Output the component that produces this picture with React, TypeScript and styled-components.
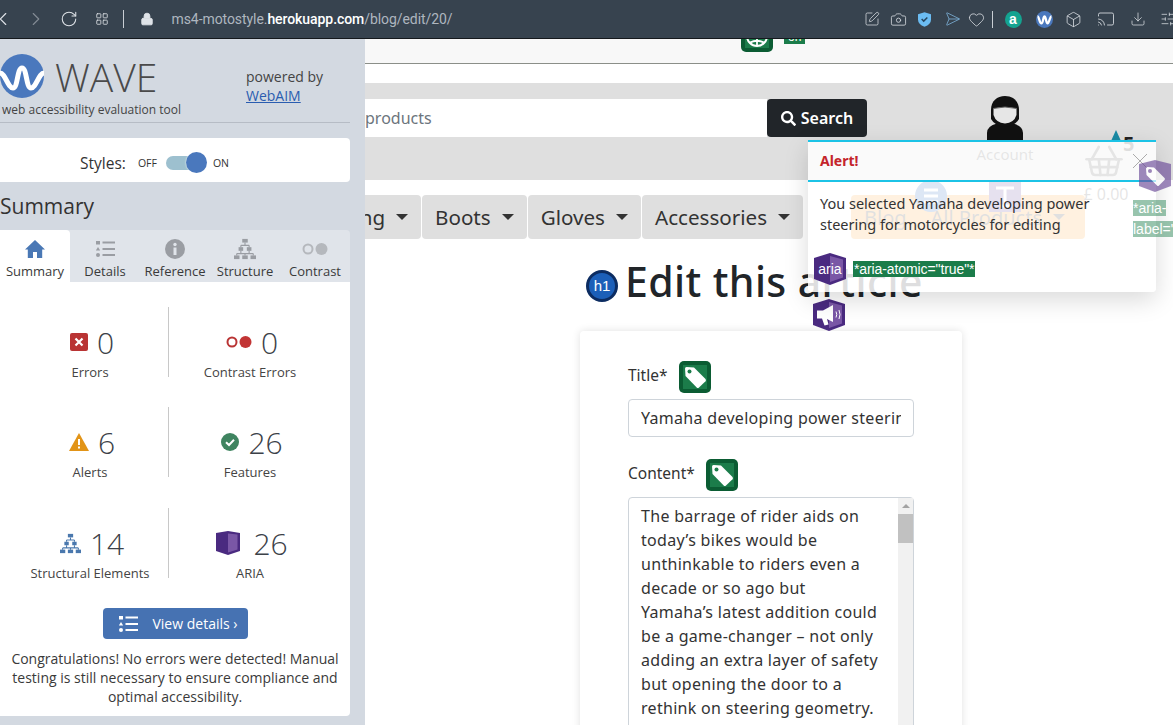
import React from 'react';
import styled, { createGlobalStyle } from 'styled-components';
import {
  Box,
  Camera,
  Cast,
  ChevronLeft,
  ChevronRight,
  Download,
  Heart,
  LayoutGrid,
  Lock,
  RotateCw,
  Send,
  ShoppingBasket,
  SlidersHorizontal,
  SquarePen,
} from 'lucide-react';
import { FaSearch } from 'react-icons/fa';

const GlobalStyle = createGlobalStyle`
  html, body { margin: 0; padding: 0; height: 725px; overflow: hidden; background: #fff; }
  * { box-sizing: border-box; }
`;

const siteFont = `"Noto Sans", "Open Sans", sans-serif`;
const waveFont = `"Open Sans", "Noto Sans", sans-serif`;

const ARTICLE = `The barrage of rider aids on
today’s bikes would be
unthinkable to riders even a
decade or so ago but
Yamaha’s latest addition could
be a game-changer – not only
adding an extra layer of safety
but opening the door to a
rethink on steering geometry.`;

function TreeIcon({ color, size }: { color: string; size: number }) {
  return (
    <svg width={size} height={size} viewBox="0 0 24 24" fill="none">
      <rect x="9" y="1" width="6" height="4" fill={color} />
      <rect x="5" y="10" width="5" height="4" fill={color} />
      <rect x="14" y="10" width="5" height="4" fill={color} />
      <rect x="0" y="19" width="6" height="4" fill={color} />
      <rect x="9" y="19" width="6" height="4" fill={color} />
      <rect x="18" y="19" width="6" height="4" fill={color} />
      <path d="M12 5v3M7.500 8h9M7.500 8v2M16.500 8v2M7.500 14v3M16.500 14v3M3 17h18M3 17v2M12 17v2M21 17v2" stroke={color} strokeWidth="1.2" />
    </svg>
  );
}

function ListGlyph({ color, width, height }: { color: string; width: number; height: number }) {
  return (
    <svg width={width} height={height} viewBox="0 0 19 16">
      <rect x="0" y="0" width="4" height="3.500" fill={color} />
      <path d="M2 6 4.200 9.500H-.2Z" fill={color} />
      <circle cx="2" cy="14" r="2" fill={color} />
      <path d="M6.500 1.500H19M6.500 8H19M6.500 14H19" stroke={color} strokeWidth="2" />
    </svg>
  );
}

function HomeGlyph() {
  return (
    <svg width="20" height="18" viewBox="0 0 20 18">
      <path d="M10 0 20 9.500H17.200V18H12V12H8V18H2.800V9.500H0Z" fill="#4a78b5" />
    </svg>
  );
}

function InfoGlyph() {
  return (
    <svg width="20" height="20" viewBox="0 0 20 20">
      <circle cx="10" cy="10" r="10" fill="#9a9da3" />
      <rect x="8.500" y="8.500" width="3" height="7.500" fill="#e0e4ea" />
      <circle cx="10" cy="5.500" r="1.700" fill="#e0e4ea" />
    </svg>
  );
}

function TagBadge() {
  return (
    <svg width="32" height="32" viewBox="0 0 32 32">
      <rect width="32" height="32" rx="5" fill="#0b5c33" />
      <rect x="4" y="4" width="24" height="24" fill="#1b7c4a" />
      <path d="M6 7.500 Q6 6 7.500 6 L15 6.500 L26.500 18 Q27.500 19.200 26.500 20.300 L20 26.500 Q18.800 27.500 17.700 26.500 L6.500 15 Z" fill="#fff" />
      <circle cx="10.500" cy="10.500" r="2" fill="#1b7c4a" />
    </svg>
  );
}

function GlobeBadge() {
  return (
    <svg width="32" height="32" viewBox="0 0 32 32">
      <rect width="32" height="32" rx="5" fill="#0b5c33" />
      <rect x="4" y="4" width="24" height="24" fill="#1b7c4a" />
      <circle cx="16" cy="16" r="10" fill="none" stroke="#fff" strokeWidth="2" />
      <path d="M6 16H26M16 6V26M9 22.500Q16 19 23 22.500M9 9.500Q16 13 23 9.500" fill="none" stroke="#fff" strokeWidth="1.800" />
    </svg>
  );
}

function PurpleTag() {
  return (
    <svg width="32" height="32" viewBox="0 0 32 32">
      <path d="M16 0 32 4V26L16 32 0 26V4Z" fill="#6b4a98" />
      <path d="M7 8.500Q7 7 8.500 7L15 7.500 25.500 18Q26.500 19 25.500 20L20 25.500Q19 26.500 18 25.500L7.500 15Z" fill="#fff" />
      <circle cx="11" cy="11" r="2" fill="#6b4a98" />
    </svg>
  );
}

function HexShell({ children }: { children?: React.ReactNode }) {
  return (
    <svg width="32" height="32" viewBox="0 0 32 32">
      <path d="M16 0 32 5V26L16 32 0 26V5Z" fill="#4a2a80" />
      <path d="M16 3 29 6.500V24.500L16 29Z" fill="#7a57a6" />
      {children}
    </svg>
  );
}

function MegaphoneBadge() {
  return (
    <HexShell>
      <path d="M4 11.500h6l10-5.500v17l-6-3 1.500 5.500-4 1-2.500-7H4Z" fill="#fff" />
      <path d="M23 12.500q1.500 3 0 6M26 11q2 4.500 0 9" stroke="#fff" strokeWidth="1" fill="none" />
    </HexShell>
  );
}

function AriaBook() {
  return (
    <svg width="24" height="24" viewBox="0 0 24 24">
      <path d="M12 0 24 2V20L12 24 0 20V2Z" fill="#4a2a80" />
      <path d="M12 2.500 21.500 3.500V18.500L12 21.500Z" fill="#7a57a6" />
    </svg>
  );
}

function HelmetIcon() {
  return (
    <svg width="38" height="44" viewBox="0 0 38 44">
      <path d="M1 44V37Q1 30 11 27.500L27 27.500Q37 30 37 37V44Z" fill="#111" />
      <path d="M5 14C5 5 11 0 19 0S33 5 33 14V23Q29 30 19 31 9 30 5 23Z" fill="#111" />
      <path d="M7.500 12.500Q19 9.500 30.500 12.500V19Q28 27 19 27.500 10 27 7.500 19Z" fill="#e6e6e6" />
      <path d="M7 12.500Q19 9.500 31 12.500" stroke="#666" strokeWidth="1" fill="none" />
    </svg>
  );
}

function LogoMark() {
  return (
    <svg width="44" height="44" viewBox="0 0 44 44">
      <circle cx="22" cy="22" r="22" fill="#4a78bd" />
      <path d="M0 19C5 19 8 34 13 34C18 34 17 14 22 14C27 14 26 34 31 34C36 34 39 19 44 19" stroke="#fff" strokeWidth="5" fill="none" />
    </svg>
  );
}

function ShieldIcon() {
  return (
    <svg width="13" height="15" viewBox="0 0 16 18">
      <path d="M8 0 16 2.500V9Q16 15 8 18 0 15 0 9V2.500Z" fill="#6bbcf2" />
      <path d="M4.500 8.500 7 11 11.500 6.500" stroke="#26465f" strokeWidth="1.800" fill="none" />
    </svg>
  );
}

function ErrorIcon() {
  return (
    <svg width="18" height="18" viewBox="0 0 18 18">
      <rect width="18" height="18" rx="2" fill="#b93434" />
      <path d="M5.500 5.500 12.500 12.500M12.500 5.500 5.500 12.500" stroke="#fff" strokeWidth="2.200" />
    </svg>
  );
}

function DotPair({ color, fill }: { color: string; fill: string }) {
  return (
    <svg width="26" height="12" viewBox="0 0 26 12">
      <circle cx="6" cy="6" r="4.500" fill="none" stroke={color} strokeWidth="2" />
      <circle cx="19.500" cy="6" r="6" fill={fill} />
    </svg>
  );
}

function AlertIcon() {
  return (
    <svg width="20" height="18" viewBox="0 0 20 18">
      <path d="M10 0 20 18H0Z" fill="#e29417" />
      <path d="M10 6v6M10 13.500v2" stroke="#fff" strokeWidth="2" />
    </svg>
  );
}

function FeatureIcon() {
  return (
    <svg width="18" height="18" viewBox="0 0 18 18">
      <circle cx="9" cy="9" r="9" fill="#3f8460" />
      <path d="M5 9.200 8 12 13 6.800" stroke="#fff" strokeWidth="2" fill="none" />
    </svg>
  );
}

function WaveExt() {
  return (
    <svg width="17" height="17" viewBox="0 0 44 44">
      <circle cx="22" cy="22" r="22" fill="#4a78bd" />
      <path d="M4 14C8 14 9 32 14 32S18 14 22 14 26 32 30 32 36 14 40 14" stroke="#fff" strokeWidth="6" fill="none" />
    </svg>
  );
}

const STATS = [
  { key: 'err', icon: <ErrorIcon />, value: '0', label: 'Errors' },
  { key: 'con', icon: <DotPair color="#b93434" fill="#c23535" />, value: '0', label: 'Contrast Errors' },
  { key: 'ale', icon: <AlertIcon />, value: '6', label: 'Alerts' },
  { key: 'fea', icon: <FeatureIcon />, value: '26', label: 'Features' },
  { key: 'str', icon: <TreeIcon color="#4a78ad" size={21} />, value: '14', label: 'Structural Elements' },
  { key: 'ari', icon: <AriaBook />, value: '26', label: 'ARIA', wide: true },
];

export default function App() {
  return (
    <>
      <GlobalStyle />
      <Page>
        <Toolbar>
          <NavIcons>
            <ChevronLeft size={22} strokeWidth={1.25} />
            <Dimmed><ChevronRight size={22} strokeWidth={1.25} /></Dimmed>
            <RotateCw size={18} strokeWidth={1.4} />
            <LayoutGrid size={14} strokeWidth={1.4} />
          </NavIcons>
          <ToolbarRule />
          <Lock size={14} fill="#dfe3e8" strokeWidth={1.5} />
          <Url>ms4-motostyle.<strong>herokuapp.com</strong>/blog/edit/20/</Url>
          <ExtIcons>
            <SquarePen size={16} strokeWidth={1.1} />
            <Camera size={17} strokeWidth={1.1} />
            <ShieldIcon />
            <BlueSend><Send size={16} strokeWidth={1.1} /></BlueSend>
            <Heart size={17} strokeWidth={1.1} />
            <ExtRule />
            <ExtBadge>a</ExtBadge>
            <WaveExt />
            <Box size={17} strokeWidth={1.1} />
            <Cast size={18} strokeWidth={1.1} />
            <Download size={16} strokeWidth={1.1} />
            <SlidersHorizontal size={16} strokeWidth={1.1} />
          </ExtIcons>
        </Toolbar>
        <Content>
          <Sidebar>
            <Brand>
              <LogoRow>
                <LogoMark />
                <Wordmark>WAVE</Wordmark>
                <Powered>powered by<br /><a href="#webaim">WebAIM</a></Powered>
              </LogoRow>
              <Tagline>web accessibility evaluation tool</Tagline>
            </Brand>
            <StylesPanel>
              <StylesLabel>Styles:</StylesLabel>
              <SwitchLabel>OFF</SwitchLabel>
              <SwitchTrack><SwitchKnob /></SwitchTrack>
              <SwitchLabel>ON</SwitchLabel>
            </StylesPanel>
            <SummaryTitle>Summary</SummaryTitle>
            <Tabs>
              <Tab $active><TabIcon><HomeGlyph /></TabIcon>Summary</Tab>
              <Tab><TabIcon><ListGlyph color="#9a9da3" width={19} height={16} /></TabIcon>Details</Tab>
              <Tab><TabIcon><InfoGlyph /></TabIcon>Reference</Tab>
              <Tab><TabIcon><TreeIcon color="#9a9da3" size={22} /></TabIcon>Structure</Tab>
              <Tab><TabIcon><DotPair color="#b5b8bd" fill="#b5b8bd" /></TabIcon>Contrast</Tab>
            </Tabs>
            <SummaryBody>
              <StatGrid>
                {STATS.map((s) => (
                  <Stat key={s.key}>
                    <StatValue $wide={s.wide}>{s.icon}<span>{s.value}</span></StatValue>
                    <StatLabel>{s.label}</StatLabel>
                  </Stat>
                ))}
              </StatGrid>
              <DetailsButton>
                <ListGlyph color="#fff" width={19} height={16} />
                View details ›
              </DetailsButton>
              <Congrats>
                Congratulations! No errors were detected! Manual testing is still necessary to ensure compliance and optimal accessibility.
              </Congrats>
            </SummaryBody>
          </Sidebar>

          <Main>
            <TopStrip>
              <StripBadge><GlobeBadge /></StripBadge>
              <StripLabel>on</StripLabel>
            </TopStrip>
            <HeaderBand>
              <SearchForm>
                <SearchInput>products</SearchInput>
                <SearchButton><FaSearch size={15} />Search</SearchButton>
              </SearchForm>
              <Account>
                <HelmetIcon />
                <span>Account</span>
              </Account>
              <Basket>
                <BasketCount>5</BasketCount>
                <ShoppingBasket size={42} strokeWidth={1.5} />
                <span>£ 0.00</span>
              </Basket>
            </HeaderBand>
            <NavRow>
              <NavItems>
                {['Clothing', 'Boots', 'Gloves', 'Accessories'].map((n) => (
                  <NavItem key={n}>{n}<Caret /></NavItem>
                ))}
              </NavItems>
              <Highlight>
                <HighlightLink>Blog</HighlightLink>
                <HighlightLink>All Products<Caret /></HighlightLink>
              </Highlight>
            </NavRow>
            <TitleRow>
              <H1Badge>h1</H1Badge>
              <Heading>Edit this article</Heading>
            </TitleRow>
            <Card>
              <FieldLabel>Title*<TagBadge /></FieldLabel>
              <TextInput readOnly value="Yamaha developing power steering for motorcycles" />
              <FieldLabel $second>Content*<TagBadge /></FieldLabel>
              <TextArea>
                <AreaText>{ARTICLE}</AreaText>
                <ScrollTrack>
                  <ScrollArrow />
                  <ScrollThumb />
                </ScrollTrack>
              </TextArea>
            </Card>

            <FloatIcon $x={550} $y={141}><ListBadge /></FloatIcon>
            <FloatIcon $x={624} $y={141}><StructureBadge /></FloatIcon>

            <Toast>
              <ToastHead>
                Alert!
                <ToastClose />
              </ToastHead>
              <ToastBody>You selected Yamaha developing power steering for motorcycles for editing</ToastBody>
              <ToastAria>
                <HexShell><HexText x="16" y="21">aria</HexText></HexShell>
                <AriaLabel>*aria-atomic="true"*</AriaLabel>
              </ToastAria>
            </Toast>

            <FloatIcon $x={448} $y={260}><MegaphoneBadge /></FloatIcon>
            <FadedIcon $x={774} $y={121}><PurpleTag /></FadedIcon>
            <FadedLabel><span>*aria-</span><br /><span>label="</span></FadedLabel>
          </Main>
        </Content>
      </Page>
    </>
  );
}

function ListBadge() {
  return (
    <svg width="32" height="32" viewBox="0 0 32 32">
      <circle cx="16" cy="16" r="16" fill="#1c5fb8" />
      <path d="M9 10h14M9 16h14M9 22h14" stroke="#fff" strokeWidth="3" />
    </svg>
  );
}

function StructureBadge() {
  return (
    <svg width="32" height="32" viewBox="0 0 32 32">
      <rect width="32" height="32" fill="#5a3a94" />
      <path d="M7 8h18M16 8v18M11 26h10" stroke="#fff" strokeWidth="3" fill="none" />
    </svg>
  );
}

const Page = styled.div`
  width: 1173px;
  height: 725px;
  display: flex;
  flex-direction: column;
  overflow: hidden;
`;

const Toolbar = styled.header`
  height: 39px;
  flex: none;
  display: flex;
  align-items: center;
  background: #37434f;
  border-bottom: 1px solid #15191d;
  color: #dfe3e8;
  & > svg { flex: none; }
`;

const NavIcons = styled.div`
  display: grid;
  grid-template-columns: repeat(4, 33px);
  justify-items: center;
  align-items: center;
  margin-left: -13.500px;
`;

const Dimmed = styled.span`
  display: flex;
  opacity: 0.45;
`;

const ToolbarRule = styled.span`
  width: 1px;
  height: 18px;
  background: #c9ced4;
  margin: 0 16px 0 4px;
  flex: none;
`;

const Url = styled.div`
  margin-left: 18px;
  font: 14px "Roboto", sans-serif;
  letter-spacing: -0.07px;
  color: #aeb6bf;
  strong { color: #fff; font-weight: 500; }
`;

const ExtIcons = styled.div`
  margin-left: auto;
  margin-right: -10px;
  display: grid;
  grid-template-columns: repeat(5, 26px) 6px 36px 26px 32px 34px 30px 30px;
  justify-items: center;
  align-items: center;
`;

const ExtRule = styled.span`
  width: 1px;
  height: 17px;
  background: #c9ced4;
`;

const BlueSend = styled.span`
  display: flex;
  color: #80b5dd;
  transform: rotate(45deg);
`;

const ExtBadge = styled.span`
  width: 17px;
  height: 17px;
  border-radius: 50%;
  background: #14a390;
  color: #fff;
  font: bold 14px/16px "Liberation Sans", sans-serif;
  text-align: center;
`;

const Content = styled.div`
  flex: 1;
  min-height: 0;
  display: flex;
`;

const Sidebar = styled.aside`
  width: 365px;
  flex: none;
  background: #d3d9e1;
  padding-right: 15px;
  font-family: ${waveFont};
  color: #333;
`;

const Brand = styled.div`
  height: 84px;
  padding-top: 15px;
  border-bottom: 1px solid #b6bcc5;
`;

const LogoRow = styled.div`
  display: flex;
  align-items: center;
  height: 44px;
  & > svg { flex: none; }
`;

const Wordmark = styled.div`
  margin-left: 11px;
  font-size: 39px;
  font-weight: 300;
  color: #4a4a4a;
  width: 191px;
  flex: none;
`;

const Powered = styled.div`
  font-size: 14px;
  line-height: 19px;
  color: #444;
  margin-top: 20px;
  white-space: nowrap;
  flex: none;
  a { color: #2a5db0; }
`;

const Tagline = styled.div`
  margin: 3px 0 0 2px;
  font-size: 12px;
  line-height: 17px;
  color: #444;
`;

const StylesPanel = styled.div`
  margin-top: 15px;
  height: 44px;
  padding: 5px 0 0 80px;
  background: #fff;
  border-radius: 0 4px 4px 0;
  display: flex;
  align-items: center;
`;

const StylesLabel = styled.span`
  font-size: 15.500px;
  margin-right: 12px;
`;

const SwitchLabel = styled.span`
  font-size: 10.500px;
`;

const SwitchTrack = styled.div`
  position: relative;
  width: 36px;
  height: 14px;
  margin: 0 11px 0 9px;
  border-radius: 7px;
  background: #9dc0cf;
`;

const SwitchKnob = styled.div`
  position: absolute;
  right: -5px;
  top: -4px;
  width: 21px;
  height: 21px;
  border-radius: 50%;
  background: #4a78bd;
  box-shadow: 0 0 2px #fff;
`;

const SummaryTitle = styled.h2`
  margin: 0;
  height: 48px;
  font-size: 21px;
  font-weight: 400;
  line-height: 48px;
  color: #333;
`;

const Tabs = styled.div`
  height: 52px;
  display: grid;
  grid-template-columns: repeat(5, 70px);
  background: #e0e4ea;
  border-radius: 0 4px 0 0;
`;

const Tab = styled.div<{ $active?: boolean }>`
  display: flex;
  flex-direction: column;
  align-items: center;
  font-size: 13px;
  line-height: 17px;
  color: #3a3a3a;
  background: ${(p) => (p.$active ? '#fff' : 'transparent')};
  border-radius: ${(p) => (p.$active ? '0 4px 0 0' : '0')};
`;

const TabIcon = styled.div`
  height: 33px;
  display: flex;
  align-items: center;
  justify-content: center;
  padding-top: 4px;
`;

const SummaryBody = styled.div`
  height: 434px;
  background: #fff;
  border-radius: 0 0 4px 0;
  padding-top: 25px;
  display: flex;
  flex-direction: column;
  align-items: center;
`;

const StatGrid = styled.div`
  width: 100%;
  display: grid;
  grid-template-columns: 169px 181px;
  grid-template-rows: 100px 101px 100px;
`;

const Stat = styled.div`
  height: 70px;
  display: flex;
  flex-direction: column;
  align-items: center;
  &:nth-child(odd) { border-right: 1px solid #c8c8c8; padding-left: 12px; }
  &:nth-child(even) { padding-right: 19px; }
`;

const StatValue = styled.div<{ $wide?: boolean }>`
  margin: 23px 0 0 4px;
  height: 24px;
  flex: none;
  display: flex;
  align-items: center;
  gap: ${(p) => (p.$wide ? '13px' : '9px')};
  font-size: 30px;
  font-weight: 300;
  color: #3c4148;
`;

const StatLabel = styled.div`
  margin-top: 10px;
  flex: none;
  font-size: 13px;
  line-height: 17px;
  color: #444;
`;

const DetailsButton = styled.button`
  margin-top: 0;
  width: 145px;
  height: 31px;
  padding: 0 0 0 7px;
  flex: none;
  display: flex;
  align-items: center;
  justify-content: center;
  gap: 14px;
  border: 0;
  border-radius: 4px;
  background: #4672b2;
  color: #fff;
  font: 14px ${waveFont};
`;

const Congrats = styled.p`
  margin: 10px 0 0;
  padding: 0 8px;
  text-align: center;
  font-size: 14px;
  line-height: 19px;
  color: #3a3a3a;
`;

const Main = styled.main`
  position: relative;
  flex: 1;
  min-width: 0;
  overflow: hidden;
  font-family: ${siteFont};
  color: #222;
`;

const TopStrip = styled.div`
  position: relative;
  height: 25px;
  background: #f8f8f8;
  border-bottom: 1px solid #8b8f89;
`;

const StripBadge = styled.div`
  position: absolute;
  left: 376px;
  bottom: 11px;
  height: 32px;
`;

const StripLabel = styled.span`
  position: absolute;
  left: 419px;
  top: -9px;
  padding: 0 4px;
  background: #1b7c4a;
  color: #fff;
  font: 12px/14px "Liberation Sans", sans-serif;
`;

const HeaderBand = styled.div`
  margin-top: 19px;
  height: 97px;
  background: #dfdfdf;
  display: flex;
  align-items: flex-start;
`;

const SearchForm = styled.div`
  margin-top: 16px;
  width: 502px;
  height: 38px;
  flex: none;
  display: flex;
`;

const SearchInput = styled.div`
  flex: 1;
  background: #fff;
  font-size: 16px;
  line-height: 38px;
  color: #6c757d;
`;

const SearchButton = styled.div`
  width: 100px;
  border-radius: 4px;
  background: #212529;
  color: #fff;
  display: flex;
  align-items: center;
  justify-content: center;
  gap: 5px;
  font-size: 16px;
  font-weight: 600;
`;

const Account = styled.div`
  margin: 13px 0 0 98px;
  width: 80px;
  flex: none;
  display: flex;
  flex-direction: column;
  align-items: center;
  font-size: 15px;
  line-height: 20px;
  color: #555;
  span { margin-top: 4px; }
`;

const Basket = styled.div`
  position: relative;
  margin: 57px 0 0 24px;
  width: 70px;
  flex: none;
  display: flex;
  flex-direction: column;
  align-items: center;
  font-size: 16px;
  line-height: 20px;
  color: #555;
  svg { margin-bottom: 2px; }
  span:last-child { margin-left: 4px; }
`;

const BasketCount = styled.span`
  position: absolute;
  top: -6px;
  left: 54px;
  font-size: 20px;
  font-weight: 700;
  color: #222;
  &::before {
    content: '';
    position: absolute;
    left: -12px;
    top: -4px;
    border: 5px solid transparent;
    border-bottom: 11px solid #1a8ba5;
    border-top: 0;
  }
`;

const NavRow = styled.nav`
  margin-top: 15px;
  height: 44px;
  display: flex;
`;

const NavItems = styled.div`
  width: 438px;
  flex: none;
  display: flex;
  justify-content: flex-end;
  gap: 1px;
`;

const NavItem = styled.div`
  flex: none;
  display: flex;
  align-items: center;
  padding: 0 13px;
  height: 44px;
  background: #dfdfdf;
  border-radius: 4px;
  font-size: 20.600px;
  color: #333;
`;

const Caret = styled.i`
  display: inline-block;
  margin-left: 11px;
  border: 6px solid transparent;
  border-top-color: currentColor;
  border-bottom: 0;
`;

const Highlight = styled.div`
  margin-left: 48px;
  width: 234px;
  height: 44px;
  flex: none;
  background: #ffa030;
  border-radius: 4px;
  display: flex;
  align-items: center;
  padding-left: 13px;
  gap: 24px;
  font-size: 20px;
  color: #333;
`;

const HighlightLink = styled.span`
  display: flex;
  align-items: center;
  white-space: nowrap;
`;

const TitleRow = styled.div`
  margin: 13px 0 0 221px;
  height: 58px;
  display: flex;
  align-items: center;
`;

const H1Badge = styled.div`
  width: 32px;
  height: 32px;
  flex: none;
  border-radius: 50%;
  margin: 10px 7px 0 0;
  background: #1c5fb8;
  border: 3px solid #0c2c61;
  color: #fff;
  text-align: center;
  font: 15px/25px "Liberation Sans", sans-serif;
`;

const Heading = styled.h1`
  margin: 0;
  font-size: 41px;
  font-weight: 500;
  letter-spacing: 0.4px;
  white-space: nowrap;
  color: #212529;
`;

const Card = styled.section`
  margin: 21px 0 0 215px;
  width: 382px;
  height: 500px;
  padding: 30px 48px;
  background: #fff;
  border-radius: 4px;
  box-shadow: 0 0 8px rgba(0, 0, 0, 0.12);
`;

const FieldLabel = styled.label<{ $second?: boolean }>`
  display: flex;
  align-items: flex-start;
  gap: 11px;
  height: 32px;
  margin-top: ${(p) => (p.$second ? '22px' : '0')};
  margin-bottom: 6px;
  font-size: 15.500px;
  line-height: 28px;
  color: #333;
`;

const TextInput = styled.input`
  display: block;
  width: 286px;
  height: 38px;
  padding: 0 12px;
  border: 1px solid #ced4da;
  border-radius: 4px;
  font: 16px ${siteFont};
  letter-spacing: 0.3px;
  color: #333;
  outline: none;
`;

const TextArea = styled.div`
  width: 286px;
  height: 400px;
  display: flex;
  border: 1px solid #ced4da;
  border-radius: 4px;
`;

const AreaText = styled.div`
  flex: 1;
  padding: 6px 0 0 12px;
  font-size: 16px;
  letter-spacing: 0.3px;
  line-height: 24px;
  white-space: pre;
  overflow: hidden;
  color: #333;
`;

const ScrollTrack = styled.div`
  width: 15px;
  flex: none;
  background: #f1f1f1;
`;

const ScrollArrow = styled.div`
  height: 16px;
  display: flex;
  align-items: center;
  justify-content: center;
  &::before {
    content: '';
    border: 4px solid transparent;
    border-bottom-color: #a3a3a3;
    border-top: 0;
  }
`;

const ScrollThumb = styled.div`
  height: 29px;
  background: #c1c1c1;
`;

const FloatIcon = styled.div<{ $x: number; $y: number }>`
  position: absolute;
  left: ${(p) => p.$x}px;
  top: ${(p) => p.$y}px;
  height: 32px;
`;

const FadedIcon = styled(FloatIcon)`
  opacity: 0.65;
  z-index: 3;
`;

const FadedLabel = styled.div`
  position: absolute;
  left: 768px;
  top: 159px;
  width: 40px;
  z-index: 3;
  overflow: hidden;
  white-space: nowrap;
  font: 14px/21px "Liberation Sans", sans-serif;
  color: #fff;
  span { background: rgba(27, 124, 74, 0.45); }
`;

const Toast = styled.div`
  position: absolute;
  left: 443px;
  top: 101px;
  width: 348px;
  height: 152px;
  z-index: 2;
  background: rgba(255, 255, 255, 0.85);
  border-top: 2px solid #1cc3e6;
  border-radius: 0 0 4px 4px;
  box-shadow: 0 8px 24px rgba(0, 0, 0, 0.15);
`;

const ToastHead = styled.div`
  position: relative;
  height: 40px;
  padding: 0 0 2px 12px;
  display: flex;
  align-items: center;
  border-bottom: 2px solid #1cc3e6;
  font-size: 14px;
  font-weight: 700;
  color: #c4242b;
`;

const ToastClose = styled.span`
  position: absolute;
  right: 9px;
  top: 12px;
  width: 14px;
  height: 14px;
  opacity: 0.6;
  background:
    linear-gradient(45deg, transparent 47%, #777 47%, #777 53%, transparent 53%),
    linear-gradient(-45deg, transparent 47%, #777 47%, #777 53%, transparent 53%);
`;

const ToastBody = styled.div`
  padding: 11px 12px 0;
  font-size: 14.500px;
  line-height: 21px;
  color: #333;
`;

const ToastAria = styled.div`
  margin: 18px 0 0 6px;
  height: 32px;
  display: flex;
  align-items: center;
  gap: 7px;
`;

const HexText = styled.text`
  font: 14px "Liberation Sans", sans-serif;
  fill: #fff;
  text-anchor: middle;
`;

const AriaLabel = styled.span`
  padding: 0 1px;
  background: #1b7c4a;
  color: #fff;
  font: 14px/16px "Liberation Sans", sans-serif;
  letter-spacing: -0.1px;
`;
